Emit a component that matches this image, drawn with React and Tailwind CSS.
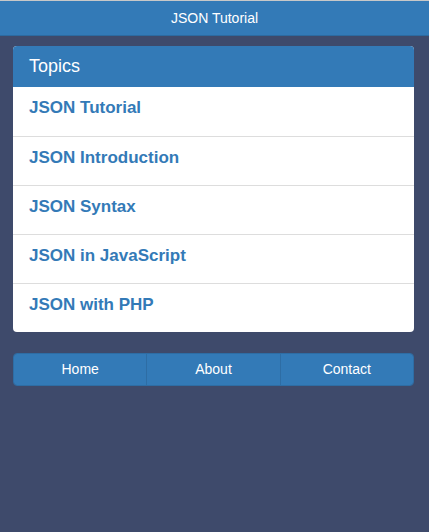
import React from "react";

const topics = [
  "JSON Tutorial",
  "JSON Introduction",
  "JSON Syntax",
  "JSON in JavaScript",
  "JSON with PHP",
];

const App = () => {
  return (
    <div
      className="min-h-[532px] bg-[#3e4a6b] pb-10"
      style={{ fontFamily: '"Liberation Sans", Arial, sans-serif' }}
    >
      <header className="h-[36px] bg-[#337ab7] border-t border-[#c8c8c8] border-b border-b-[#2c6aa0] flex items-center justify-center text-white text-[14px]">
        JSON Tutorial
      </header>

      <div className="pl-[13px] pr-[15px] pt-[10px]">
        <div className="rounded-[4px] overflow-hidden bg-white">
          <div className="h-[41px] bg-[#337ab7] flex items-center px-[16px] text-white text-[18px]">
            Topics
          </div>
          {topics.map((t, i) => (
            <div
              key={t}
              className={`h-[49px] pt-[11px] px-[16px] text-[#337ab7] font-bold text-[17px] leading-[20px] ${i > 0 ? "border-t border-[#dddddd]" : ""}`}
            >
              {t}
            </div>
          ))}
        </div>

        <div className="mt-[21px] flex h-[33px] rounded-[4px] overflow-hidden border border-[#2e6da4]">
          {["Home", "About", "Contact"].map((b, i) => (
            <button
              key={b}
              className={`flex-1 bg-[#337ab7] text-white text-[14px] ${i > 0 ? "border-l border-[#2e6da4]" : ""}`}
            >
              {b}
            </button>
          ))}
        </div>
      </div>
    </div>
  );
};

export default App;
